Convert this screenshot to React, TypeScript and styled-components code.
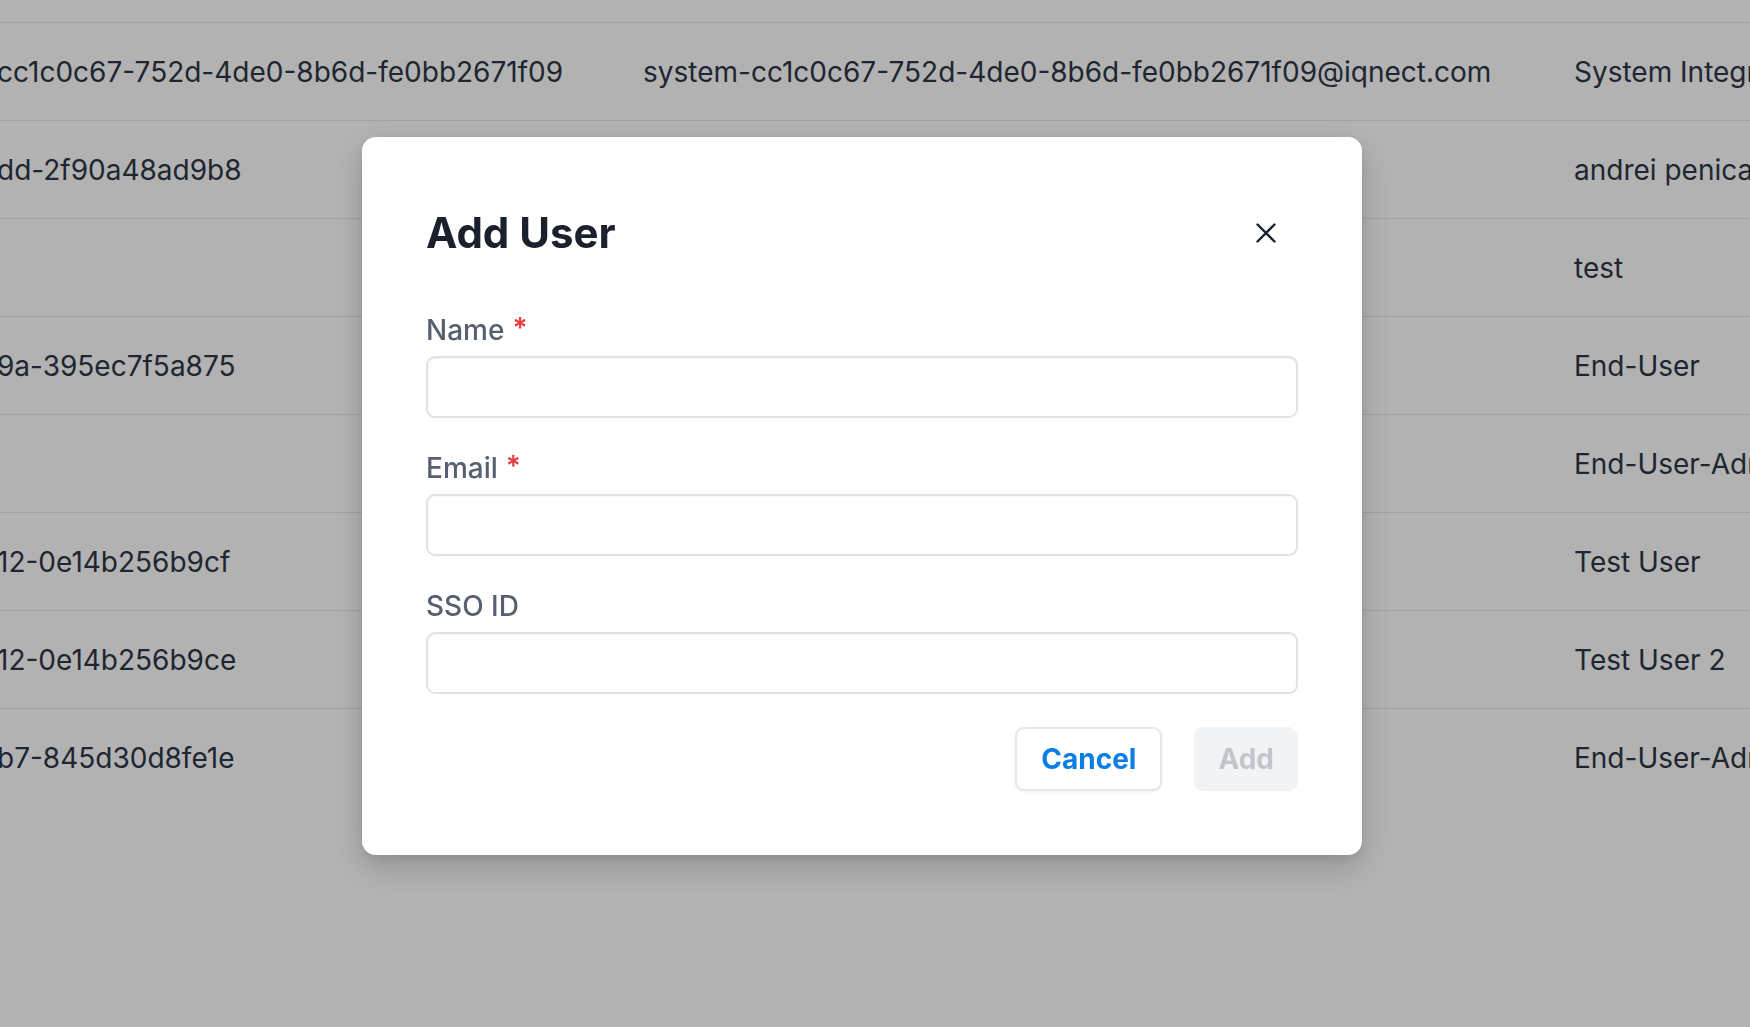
import styled, { createGlobalStyle } from "styled-components";

const GlobalStyle = createGlobalStyle`
  html, body {
    margin: 0;
    padding: 0;
    width: 100%;
    height: 100%;
    overflow: hidden;
    background: #ffffff;
    font-family: Inter, "Noto Sans", "Liberation Sans", sans-serif;
  }
  * {
    box-sizing: border-box;
  }
`;

interface UserRow {
  id: string;
  email: string;
  name: string;
}

const users: UserRow[] = [
  {
    id: "cc1c0c67-752d-4de0-8b6d-fe0bb2671f09",
    email: "system-cc1c0c67-752d-4de0-8b6d-fe0bb2671f09@iqnect.com",
    name: "System Integration",
  },
  { id: "dd-2f90a48ad9b8", email: "andrei.penica@iqnect.com", name: "andrei penica" },
  { id: "", email: "test@iqnect.com", name: "test" },
  { id: "9a-395ec7f5a875", email: "enduser@iqnect.com", name: "End-User" },
  { id: "", email: "enduser.admin@iqnect.com", name: "End-User-Admin" },
  { id: "12-0e14b256b9cf", email: "testuser@iqnect.com", name: "Test User" },
  { id: "12-0e14b256b9ce", email: "testuser2@iqnect.com", name: "Test User 2" },
  { id: "b7-845d30d8fe1e", email: "admin@iqnect.com", name: "End-User-Admin" },
];

const fields = [
  { label: "Name", required: true },
  { label: "Email", required: true },
  { label: "SSO ID", required: false },
];

export default function App() {
  return (
    <>
      <GlobalStyle />
      <Table>
        {users.map((u, i) => (
          <Row key={i}>
            <IdCell>{u.id}</IdCell>
            <Cell>{u.email}</Cell>
            <Cell>{u.name}</Cell>
          </Row>
        ))}
      </Table>
      <Overlay>
        <Dialog>
          <Header>
            <Title>Add User</Title>
            <CloseButton aria-label="Close">
              <svg width="20" height="20" viewBox="0 0 20 20" fill="none">
                <path
                  d="M1.5 1.5L18.5 18.5M18.5 1.5L1.5 18.5"
                  stroke="#1a202c"
                  strokeWidth="2.4"
                  strokeLinecap="round"
                />
              </svg>
            </CloseButton>
          </Header>
          <Form>
            {fields.map((f) => (
              <Field key={f.label}>
                <Label>
                  {f.label}
                  {f.required && <Required>*</Required>}
                </Label>
                <Input type="text" />
              </Field>
            ))}
          </Form>
          <Footer>
            <CancelButton>Cancel</CancelButton>
            <AddButton disabled>Add</AddButton>
          </Footer>
        </Dialog>
      </Overlay>
    </>
  );
}

const Table = styled.div`
  padding-top: 22px;
  width: 100%;
`;

const Row = styled.div`
  display: grid;
  grid-template-columns: 643px 931px 1fr;
  align-items: center;
  height: 98px;
  border-top: 1px solid #e6e8eb;
`;

const Cell = styled.div`
  font-size: 28px;
  color: #2d3748;
  white-space: nowrap;
  line-height: 1.5;
`;

const IdCell = styled(Cell)`
  margin-left: -3px;
`;

const Overlay = styled.div`
  position: fixed;
  inset: 0;
  background: rgba(0, 0, 0, 0.3);
  display: flex;
  justify-content: center;
  align-items: flex-start;
  padding: 137px 26px 0 0;
`;

const Dialog = styled.div`
  width: 1000px;
  background: #ffffff;
  border-radius: 14px;
  padding: 64px;
  box-shadow: 0 12px 32px rgba(0, 0, 0, 0.18), 0 4px 10px rgba(0, 0, 0, 0.08);
`;

const Header = styled.div`
  display: flex;
  justify-content: space-between;
  align-items: center;
  height: 64px;
  margin-bottom: 44px;
`;

const Title = styled.h2`
  margin: 0;
  font-size: 42px;
  font-weight: 700;
  line-height: 1.2;
  color: #1a202c;
`;

const CloseButton = styled.button`
  width: 64px;
  height: 64px;
  border: none;
  background: transparent;
  display: flex;
  align-items: center;
  justify-content: center;
  padding: 0;
  cursor: pointer;
`;

const Form = styled.div`
  display: flex;
  flex-direction: column;
  gap: 29px;
`;

const Field = styled.div`
  display: flex;
  flex-direction: column;
`;

const Label = styled.label`
  font-size: 28px;
  font-weight: 500;
  line-height: 42px;
  color: #56616f;
  margin-bottom: 5px;
`;

const Required = styled.span`
  color: #e53e3e;
  margin-left: 8px;
  font-weight: 600;
  position: relative;
  top: -2px;
`;

const Input = styled.input`
  height: 62px;
  width: 100%;
  border: 2px solid #dfe2e7;
  border-radius: 9px;
  background: #ffffff;
  box-shadow: inset 0 1px 2px rgba(0, 0, 0, 0.04);
  font-size: 28px;
  font-family: inherit;
  padding: 0 24px;
  outline: none;
`;

const Footer = styled.div`
  display: flex;
  justify-content: flex-end;
  gap: 32px;
  margin-top: 33px;
`;

const BaseButton = styled.button`
  height: 64px;
  font-family: inherit;
  font-size: 28px;
  font-weight: 700;
  border-radius: 9px;
  line-height: 1;
  cursor: pointer;
`;

const CancelButton = styled(BaseButton)`
  padding: 0 24px;
  background: #ffffff;
  color: #0b7ee5;
  border: 2px solid #e4e7ec;
  box-shadow: 0 1px 3px rgba(0, 0, 0, 0.06);
`;

const AddButton = styled(BaseButton)`
  padding: 0 24px;
  background: #f2f3f5;
  color: #c1c6cd;
  border: none;
  cursor: not-allowed;
`;
